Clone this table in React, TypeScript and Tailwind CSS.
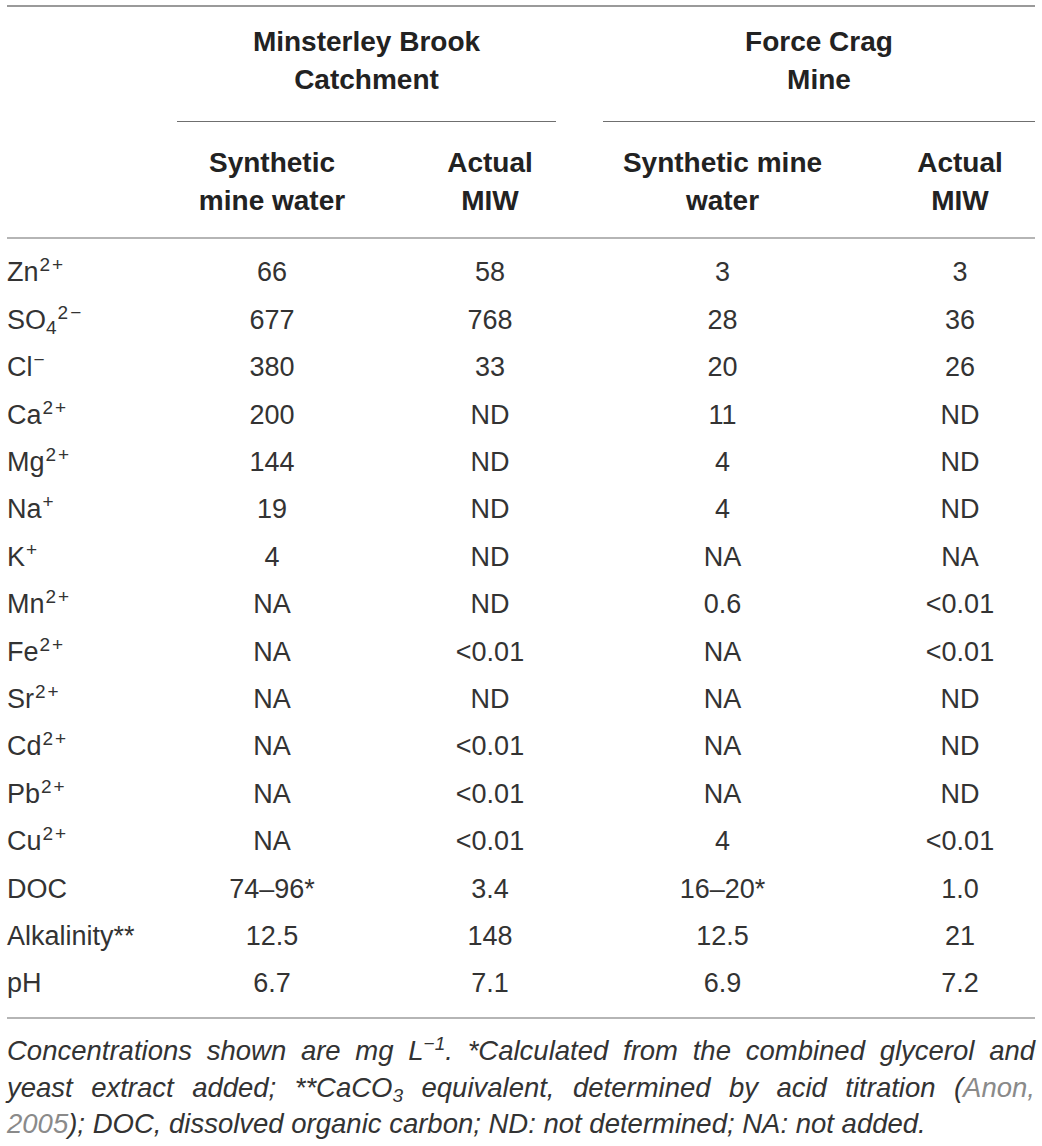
import React from "react";

type Row = { label: React.ReactNode; v: string[] };

const Sup = ({ children }: { children: React.ReactNode }) => (
  <sup className="text-[19px] top-[-10px] ml-[1px] tracking-[2px]">{children}</sup>
);

const rows: Row[] = [
  { label: <>Zn<Sup>2+</Sup></>, v: ["66", "58", "3", "3"] },
  { label: <>SO<sub className="text-[19px] bottom-[-5px]">4</sub><Sup>2−</Sup></>, v: ["677", "768", "28", "36"] },
  { label: <>Cl<Sup>−</Sup></>, v: ["380", "33", "20", "26"] },
  { label: <>Ca<Sup>2+</Sup></>, v: ["200", "ND", "11", "ND"] },
  { label: <>Mg<Sup>2+</Sup></>, v: ["144", "ND", "4", "ND"] },
  { label: <>Na<Sup>+</Sup></>, v: ["19", "ND", "4", "ND"] },
  { label: <>K<Sup>+</Sup></>, v: ["4", "ND", "NA", "NA"] },
  { label: <>Mn<Sup>2+</Sup></>, v: ["NA", "ND", "0.6", "<0.01"] },
  { label: <>Fe<Sup>2+</Sup></>, v: ["NA", "<0.01", "NA", "<0.01"] },
  { label: <>Sr<Sup>2+</Sup></>, v: ["NA", "ND", "NA", "ND"] },
  { label: <>Cd<Sup>2+</Sup></>, v: ["NA", "<0.01", "NA", "ND"] },
  { label: <>Pb<Sup>2+</Sup></>, v: ["NA", "<0.01", "NA", "ND"] },
  { label: <>Cu<Sup>2+</Sup></>, v: ["NA", "<0.01", "4", "<0.01"] },
  { label: <>DOC</>, v: ["74–96*", "3.4", "16–20*", "1.0"] },
  { label: <>Alkalinity**</>, v: ["12.5", "148", "12.5", "21"] },
  { label: <>pH</>, v: ["6.7", "7.1", "6.9", "7.2"] },
];

export default function App() {
  return (
    <div className="w-[1042px] min-h-[1146px] bg-white px-[7px] pt-[5px] font-['Liberation_Sans',Arial,sans-serif]">
      <div className="h-[2px] bg-[#9a9a9a]" />

      {/* Group header */}
      <div className="grid grid-cols-[153px_224px_212px_289px_150px] pt-[16px]">
        <div />
        <div className="col-span-2 ml-[17px] mr-[40px] flex flex-col">
          <div className="text-center text-[28px] leading-[38px] font-bold text-[#222]">
            Minsterley Brook
            <br />
            Catchment
          </div>
          <div className="mt-[22px] h-[1px] bg-[#6f6f6f]" />
        </div>
        <div className="col-span-2 ml-[7px] flex flex-col">
          <div className="text-center text-[28px] leading-[38px] font-bold text-[#222]">
            Force Crag
            <br />
            Mine
          </div>
          <div className="mt-[22px] h-[1px] bg-[#6f6f6f]" />
        </div>
      </div>

      {/* Sub header */}
      <div className="grid grid-cols-[153px_224px_212px_289px_150px] pt-[22px] pb-[17px] text-[28px] leading-[38px] font-bold text-[#222]">
        <div />
        <div className="text-center">
          Synthetic
          <br />
          mine water
        </div>
        <div className="text-center">
          Actual
          <br />
          MIW
        </div>
        <div className="pr-[36px] text-center">
          Synthetic mine
          <br />
          water
        </div>
        <div className="text-center">
          Actual
          <br />
          MIW
        </div>
      </div>
      <div className="h-[2px] bg-[#b5b5b5]" />

      {/* Body */}
      <div className="flex flex-col py-[10px] text-[27px] text-[#333]">
        {rows.map((r, i) => (
          <div key={i} className="grid h-[47.4px] grid-cols-[153px_224px_212px_289px_150px] items-center">
            <div className="whitespace-nowrap text-left">{r.label}</div>
            <div className="text-center">{r.v[0]}</div>
            <div className="text-center">{r.v[1]}</div>
            <div className="pr-[36px] text-center">{r.v[2]}</div>
            <div className="text-center">{r.v[3]}</div>
          </div>
        ))}
      </div>
      <div className="h-[2px] bg-[#b5b5b5]" />

      {/* Caption */}
      <div className="pt-[14px] text-[27.5px] italic leading-[36.5px] text-[#333]">
        <div className="whitespace-nowrap text-justify [text-align-last:justify]">
          Concentrations shown are mg L<sup className="text-[19px] top-[-10px]">−1</sup>. *Calculated from the combined glycerol and
        </div>
        <div className="whitespace-nowrap text-justify [text-align-last:justify]">
          yeast extract added; **CaCO<sub className="text-[19px] bottom-[-5px]">3</sub> equivalent, determined by acid titration (
          <span className="text-[#8a8a8a]">Anon,</span>
        </div>
        <div className="whitespace-nowrap">
          <span className="text-[#8a8a8a]">2005</span>); DOC, dissolved organic carbon; ND: not determined; NA: not added.
        </div>
      </div>
    </div>
  );
}
